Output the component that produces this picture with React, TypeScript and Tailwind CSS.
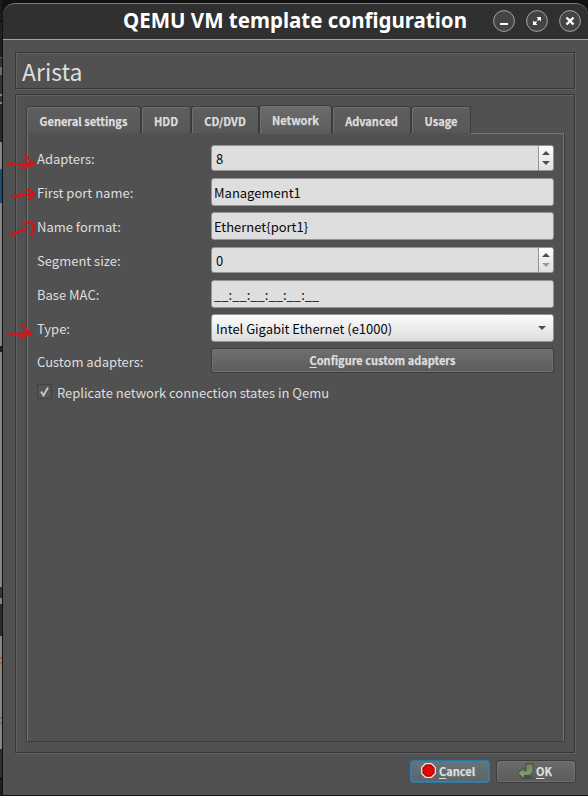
import type { ReactNode } from "react";

const ETCHED =
  "border border-[#373737] shadow-[1px_1px_0_#626262,inset_1px_1px_0_#626262]";

const BOLD = "text-[11px] font-bold [-webkit-text-stroke:0.25px_#dedede]";

function Tab({ label, className }: { label: string; className: string }) {
  return (
    <div
      className={`flex shrink-0 items-center justify-center rounded-t-[3px] border border-b-0 border-[#3c3c3c] shadow-[inset_1px_1px_0_#707070] whitespace-nowrap ${BOLD} ${className}`}
    >
      <span>{label}</span>
    </div>
  );
}

const IDLE_TAB = "mb-px h-[27px] bg-gradient-to-b from-[#5f5f5f] to-[#575757] pt-[2px]";

function Row({ label, className, children }: { label: string; className: string; children: ReactNode }) {
  return (
    <div className={`flex items-center ${className}`}>
      <div className="w-[174px] shrink-0 whitespace-nowrap leading-none">{label}</div>
      {children}
    </div>
  );
}

function Field({ children, className }: { children: ReactNode; className: string }) {
  return (
    <div
      className={`flex h-full w-[343px] items-center rounded-[3px] border border-[#949494] whitespace-nowrap text-[#080808] ${className}`}
    >
      {children}
    </div>
  );
}

function TextField({ value }: { value: string }) {
  return (
    <Field className="bg-[#dedede] pt-[2px] pl-[2px]">
      <span>{value}</span>
    </Field>
  );
}

function Spin({ value, downColor }: { value: string; downColor: string }) {
  return (
    <Field className="justify-between bg-[#dedede] pl-[4px]">
      <span className="leading-none">{value}</span>
      <div className="flex h-full w-[15px] flex-col items-center justify-center gap-[6px] rounded-r-[2px] border-l border-[#949494] bg-gradient-to-b from-[#fdfdfd] to-[#dfdfdf]">
        <svg width="8" height="4" viewBox="0 0 8 4"><path d="M4 0L8 4H0Z" fill="#4d4d4d" /></svg>
        <svg width="8" height="4" viewBox="0 0 8 4"><path d="M0 0H8L4 4Z" fill={downColor} /></svg>
      </div>
    </Field>
  );
}

function WindowButton({ children }: { children: ReactNode }) {
  return (
    <svg width="22" height="22" viewBox="0 0 22 22">
      <circle cx="11" cy="11" r="10.4" fill="#444444" stroke="#a4a4a4" strokeWidth="1" />
      {children}
    </svg>
  );
}

function Marks() {
  return (
    <svg className="absolute top-0 left-0" width="40" height="350" viewBox="0 0 40 350" fill="none" stroke="#d41518" strokeWidth="2.500" strokeLinecap="round" strokeLinejoin="round">
      <path d="M8.500 163.800C15 164.500 26 164 34 163.500M25.500 154.500C26.500 158 31 161 34 163.500L22.500 168" />
      <path d="M12 197C19 195 27 194.500 35 195M27 189.500C30 191 34 193 35 195L29 198.500" />
      <path d="M10.500 234.500C17 234 21 230 27 228.500M24 223.500C29 222 35 223 34.500 226C34 230 31 231 32 235.500" />
      <path d="M8.500 334C16 334 24 334 31 333.500M22 325C24 328 26 331 31 333L20 337.500" />
    </svg>
  );
}

function Backdrop() {
  return (
    <div className="flex w-[3px] shrink-0 flex-col border-r border-[#111111]">
      <div className="h-[21px] bg-[#1c1c1c]" />
      <div className="h-[36px] border-t border-black bg-[#202020]" />
      <div className="h-[10px] border-t border-[#5a5a5a] bg-[#303030]" />
      <div className="h-[8px] bg-[#716c66]" />
      <div className="h-[19px] bg-[#333333]" />
      <div className="h-[10px] border-y-2 border-[#858585] bg-[#333333]" />
      <div className="h-[38px] bg-[#272727]" />
      <div className="h-[28px] border-b border-[#555555] bg-[#858585]" />
      <div className="h-[33px] bg-[#1b4b70]" />
      <div className="h-[143px] bg-[#858585]" />
      <div className="h-[6px] bg-[#29200f]" />
      <div className="h-[235px] bg-[#858585]" />
      <div className="h-[11px] bg-[#333333]" />
      <div className="h-[6px] bg-[#8b8270]" />
      <div className="h-[32px] bg-[#2b2b2b]" />
      <div className="h-[21px] bg-[#858585]" />
      <div className="h-[7px] border-y-2 border-[#ad622b] bg-[#858585]" />
      <div className="h-[53px] bg-[#858585]" />
      <div className="h-[7px] border-y-2 border-[#ad622b] bg-[#858585]" />
      <div className="h-[25px] bg-[#858585]" />
      <div className="h-[29px] bg-[#303030]" />
      <div className="flex-1 border-t border-black bg-[#202020]" />
    </div>
  );
}

export default function App() {
  return (
    <div className="relative flex h-[796px] w-[588px] overflow-hidden bg-[#111111] font-['Noto_Sans_CJK_SC','Noto_Sans',sans-serif] text-[13px] text-[#dedede]">
      <Backdrop />
      <div className="mt-[3px] mb-px flex w-[585px] flex-col overflow-hidden rounded-t-[12px] bg-[#515151]">
        <header className="flex h-[37px] shrink-0 items-center rounded-t-[12px] border-t border-b border-t-[#777777] border-b-[#a3a3a3] bg-[#303030] pb-px pl-[120px] font-['Noto_Sans',sans-serif]">
          <h1 className="w-[370px] pb-px text-[20.5px] leading-none font-bold whitespace-nowrap text-white">QEMU VM template configuration</h1>
          <div className="flex gap-[11px]">
            <WindowButton><path d="M7 14H15" stroke="#fff" strokeWidth="2" /></WindowButton>
            <WindowButton><path d="M10.500 7H15V11.500L13.300 9.800L12 11L11 10L12.200 8.700ZM7 10.500L8.700 12.200L10 11L11 12L9.800 13.300L11.500 15H7Z" fill="#fff" /></WindowButton>
            <WindowButton><path d="M7.500 7.500L14.500 14.500M14.500 7.500L7.500 14.500" stroke="#fff" strokeWidth="2.400" /></WindowButton>
          </div>
        </header>

        <div className={`mx-3 mt-3 flex h-[37px] w-[560px] shrink-0 items-center pt-[2px] pl-[6px] ${ETCHED}`}>
          <span className="text-[23px] leading-none">Arista</span>
        </div>

        <main className={`mx-3 mt-[5px] flex h-[659px] w-[560px] shrink-0 flex-col px-[10px] pt-[10px] ${ETCHED}`}>
          <nav className="flex h-[29px] shrink-0 items-end">
            <Tab label="General settings" className={`w-[115px] ${IDLE_TAB}`} />
            <Tab label="HDD" className={`w-[50px] ${IDLE_TAB}`} />
            <Tab label="CD/DVD" className={`w-[68px] ${IDLE_TAB}`} />
            <Tab label="Network" className="h-[29px] w-[73px] bg-gradient-to-b from-[#6b6b6b] to-[#5c5c5c]" />
            <Tab label="Advanced" className={`w-[79px] ${IDLE_TAB}`} />
            <Tab label="Usage" className={`w-[60px] ${IDLE_TAB}`} />
            <div className="h-px flex-1 bg-[#757575]" />
          </nav>
          <section className="flex h-[608px] w-[539px] flex-col border border-t-0 border-[#3c3c3c] pl-[10px] pt-[11px] shadow-[inset_1px_0_0_#757575,inset_-1px_0_0_#757575]">
            <Row label="Adapters:" className="h-[26px]"><Spin value="8" downColor="#4d4d4d" /></Row>
            <Row label="First port name:" className="mt-[7px] h-[28px]"><TextField value="Management1" /></Row>
            <Row label="Name format:" className="mt-[6px] h-[28px]"><TextField value="Ethernet{port1}" /></Row>
            <Row label="Segment size:" className="mt-[7px] h-[26px]"><Spin value="0" downColor="#999999" /></Row>
            <Row label="Base MAC:" className="mt-[7px] h-[28px]"><TextField value="__:__:__:__:__:__" /></Row>
            <Row label="Type:" className="mt-[6px] h-[28px]">
              <Field className="justify-between bg-gradient-to-b from-[#fcfcfc] to-[#dcdcdc] pr-[7px] pl-[4px]">
                <span className="pt-[2px] tracking-[-0.02px]">Intel Gigabit Ethernet (e1000)</span>
                <svg width="8" height="4" viewBox="0 0 8 4"><path d="M0 0H8L4 4Z" fill="#4d4d4d" /></svg>
              </Field>
            </Row>
            <Row label="Custom adapters:" className="mt-[6px] h-[25px] *:first:pt-[2px]">
              <button className={`flex h-full w-[343px] items-center justify-center rounded-[3px] border border-[#3c3c3c] bg-gradient-to-b from-[#707070] to-[#5b5b5b] shadow-[inset_0_0_0_1px_#737373] ${BOLD}`}>
                <span><u className="underline-offset-2">C</u>onfigure custom adapters</span>
              </button>
            </Row>
            <div className="mt-[11px] flex h-[15px] items-center">
              <div className="mr-[5px] h-[15px] w-[15px] border border-[#404040] bg-[#555555]">
                <svg width="13" height="13" viewBox="0 0 13 13" fill="none"><path d="M3 6.500L5.500 10.500L10 2.500" stroke="#c8c8c8" strokeWidth="1.900" /></svg>
              </div>
              <span className="pt-[2px] tracking-[-0.02px] whitespace-nowrap">Replicate network connection states in Qemu</span>
            </div>
          </section>
        </main>

        <footer className={`mt-[7px] flex h-[23px] shrink-0 justify-end gap-[6px] pr-3 ${BOLD}`}>
          <button className="flex w-[80px] items-center rounded-[3px] border border-[#2878a8] bg-gradient-to-b from-[#68737a] to-[#5a6469] pl-[10px] shadow-[inset_0_0_0_1px_#4b7c98]">
            <svg className="mr-[3px] mb-[2px]" width="15" height="15" viewBox="0 0 15 15">
              <path d="M4.500 .7H10.500L14.300 4.500V10.500L10.500 14.300H4.500L.7 10.500V4.500Z" fill="#aa0000" stroke="#e8e8df" strokeWidth="1.300" />
              <circle cx="7.500" cy="7.500" r="5.300" fill="#df0909" />
            </svg>
            <span><u className="underline-offset-2">C</u>ancel</span>
          </button>
          <button className="flex w-[80px] items-center rounded-[3px] border border-[#3c3c3c] bg-gradient-to-b from-[#6b6b6b] to-[#5b5b5b] pl-[20px] shadow-[inset_0_0_0_1px_#707070]">
            <svg className="mr-[2px] mb-px" width="17" height="17" viewBox="0 0 17 17">
              <defs>
                <linearGradient id="leaf" x1="0" y1="0" x2="0" y2="1">
                  <stop offset="0" stopColor="#6d8060" />
                  <stop offset="1" stopColor="#8fa67c" />
                </linearGradient>
              </defs>
              <ellipse cx="10" cy="14.500" rx="6" ry="1.800" fill="#3c3c3c" opacity=".5" />
              <path d="M9 .8H16.200V8.500L12.500 12.300H7.200V15.800L.8 10L7.200 4.800V7.800H9Z" fill="url(#leaf)" stroke="#39452f" strokeWidth=".8" />
            </svg>
            <span><u className="underline-offset-2">O</u>K</span>
          </button>
        </footer>
      </div>
      <Marks />
    </div>
  );
}
